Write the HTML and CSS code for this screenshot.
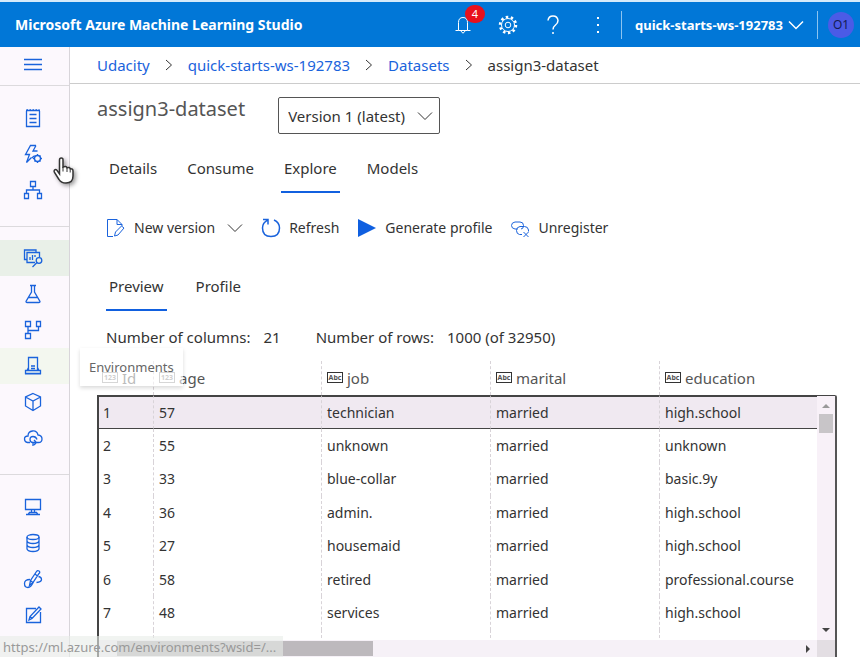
FILE: index.html
```
<!DOCTYPE html>
<html lang="en">
<head>
<meta charset="utf-8">
<meta name="viewport" content="width=device-width, initial-scale=1">
<title>assign3-dataset - Microsoft Azure Machine Learning Studio</title>
<link rel="stylesheet" href="styles.css">
</head>
<body>
<div class="app">
  <header class="topbar">
    <span class="brand">Microsoft Azure Machine Learning Studio</span>
    <button class="top-btn bell" aria-label="Notifications">
      <svg width="20" height="20" viewBox="0 0 20 20"><path d="M2.500 15.500h3v-8q0-5 4.500-5t4.500 5v8h3M5.500 15.500h9M8 16q2 4 4 0"/></svg>
      <span class="badge">4</span>
    </button>
    <button class="top-btn gear" aria-label="Settings">
      <svg width="20" height="20" viewBox="0 0 20 20"><circle cx="10" cy="10" r="8" stroke-width="2.500" stroke-dasharray="2.500 2.530"/><circle cx="10" cy="10" r="6.500"/><circle cx="10" cy="10" r="2.800"/></svg>
    </button>
    <button class="top-btn help" aria-label="Help">
      <svg width="20" height="20" viewBox="0 0 20 20"><path d="M5 5.500Q5.500 1 10 1t5 4.500q0 2.500-2.500 4.500T10 14.500M10 17v2" stroke-width="1.500"/></svg>
    </button>
    <button class="top-btn more" aria-label="More">
      <svg width="20" height="20" viewBox="0 0 20 20"><path d="M9 2h2v2H9zM9 9h2v2H9zM9 16h2v2H9z" fill="#fff" stroke="none"/></svg>
    </button>
    <button class="workspace">quick-starts-ws-192783
      <svg width="16" height="10" viewBox="0 0 16 10"><path d="M1 1.500l7 7 7-7" stroke-width="1.500"/></svg>
    </button>
    <button class="account"><span class="avatar">O1</span></button>
  </header>

  <div class="body">
    <nav class="sidebar" aria-label="Main">
      <div class="nav-top">
        <button class="nav-item" aria-label="Menu"><svg width="20" height="20" viewBox="0 0 20 20"><path d="M1 4.500h18M1 9.500h18M1 14.500h18"/></svg></button>
      </div>
      <div class="nav-group">
        <a class="nav-item" href="#" aria-label="Notebooks"><svg width="20" height="20" viewBox="0 0 20 20"><path d="M3.500 3v15.500h13V3M3 2.500h14" /><path d="M3.500 2h13" stroke-dasharray="1.500 1.500"/><path d="M6.500 6.500h7M6.500 10.500h7M6.500 14.500h7"/></svg></a>
        <a class="nav-item" href="#" aria-label="Automated ML"><svg width="20" height="20" viewBox="0 0 20 20"><path d="M13 1.500H7.500L2.500 10.500h4L3.500 18.500l5-5M13 1.500L10 7h4.500M9 14l2-2"/><circle cx="14.500" cy="14.500" r="3"/><path d="M14.500 10v1.500M14.500 17.500V19M10 14.500h1.500M17.500 14.500H19M11.500 11.500l1 1M16.500 16.500l1 1M17.500 11.500l-1 1M12.500 16.500l-1 1"/></svg></a>
        <a class="nav-item" href="#" aria-label="Designer"><svg width="20" height="20" viewBox="0 0 20 20"><path d="M7.500 1.500h5v5h-5zM1.500 13.500h4v5h-4zM14.500 13.500h4v5h-4zM10 6.500V10M3.500 13.500V10h13v3.500"/></svg></a>
      </div>
      <div class="nav-group">
        <a class="nav-item current" href="#" aria-label="Datasets"><svg width="20" height="20" viewBox="0 0 20 20"><path d="M13 4V2H1.500v9.500H4"/><path d="M12 14.500H4V4.500h12.500V9M7 12V9M9.500 12V7M12 9V7"/><circle cx="16" cy="12.500" r="2.800"/><path d="M14 14.500L9.500 19"/></svg></a>
        <a class="nav-item" href="#" aria-label="Experiments"><svg width="20" height="20" viewBox="0 0 20 20"><path d="M7 1.500h6M8.500 1.500V8L3 17.500q0 1 1 1h12q1 0 1-1L11.500 8V1.500M5.500 13.500h9"/></svg></a>
        <a class="nav-item" href="#" aria-label="Pipelines"><svg width="20" height="20" viewBox="0 0 20 20"><path d="M2.500 1.500h5v5h-5zM13.500 1.500h4v5h-4zM2.500 13.500h5v5h-5zM5 6.500v7M5 10.500h10.500v-4"/></svg></a>
        <a class="nav-item hovered" href="#" aria-label="Environments"><svg width="20" height="20" viewBox="0 0 20 20"><path d="M5.500 14V1.500h9V14M8 12.500h4M8 10h4M2.500 14.500h15v3h-15zM4 14.500l1.500-3M16 14.500l-1.500-3M2 17.800h16"/></svg></a>
        <a class="nav-item" href="#" aria-label="Models"><svg width="20" height="20" viewBox="0 0 20 20"><path d="M10 1.500l7.500 3.500v9L10 18.500 2.500 14V5zM2.500 5L10 9l7.500-4M10 9v9.500"/></svg></a>
        <a class="nav-item" href="#" aria-label="Endpoints"><svg width="20" height="20" viewBox="0 0 20 20"><path d="M7 14.500H4.500Q1.500 14 1.500 11t3.500-3Q5 3.500 9.500 3t5.500 4q4 .5 4 4t-3.500 3.500H14"/><path d="M14 11.500q-1-3-4-3t-3 3 3 3h3M11 12l2.500 2.500L11 17M10 14.500V18"/></svg></a>
      </div>
      <div class="nav-group">
        <a class="nav-item" href="#" aria-label="Compute"><svg width="20" height="20" viewBox="0 0 20 20"><path d="M2.500 2.500h15v10h-15zM8.500 12.500v3M11.500 12.500v3M6.500 15.500h7l1.500 2H5zM3 17.500h14"/></svg></a>
        <a class="nav-item" href="#" aria-label="Datastores"><svg width="20" height="20" viewBox="0 0 20 20"><ellipse cx="10" cy="4" rx="6" ry="2.500"/><path d="M4 4v12q1 2.500 6 2.500t6-2.500V4M4 8q1 2.500 6 2.500T16 8M4 12q1 2.500 6 2.500t6-2.500"/></svg></a>
        <a class="nav-item" href="#" aria-label="Data labeling"><svg width="20" height="20" viewBox="0 0 20 20"><path d="M6.500 16.500l1-5 6-9q1-1.500 2.500-.5t0 2.500l-6 9zM8 12l2.500 2M12 5l2.500 2"/><path d="M7 10.500q-5.500 0-5.500 4T5 18.500q3 0 5-5M15.500 7.500q3 .5 3 3t-5 3"/></svg></a>
        <a class="nav-item" href="#" aria-label="Linked services"><svg width="20" height="20" viewBox="0 0 20 20"><path d="M13 3.500H3.500v14h14V7M6 15l1-3.500L16 2l2 2-9 9.500zM7 11.500l2 2"/></svg></a>
      </div>
      <span class="tooltip" role="tooltip">Environments</span>
      <svg class="pointer" width="24" height="30" viewBox="0 0 24 30" aria-hidden="true"><path d="M8.500 18V4q0-2 1.800-2T12 4v7q3-1.500 4 .8 2.500-1 3.200 1 2.800-.3 2.800 2.200v5q0 7-7 7-5 0-7-3.500l-4.500-7q-1-2 .5-2.700T6 14.500z" fill="#fff" stroke="#333" stroke-width="1.500"/><path d="M12 11v4.500M16 12v4M19.200 13v3.500" stroke="#333"/></svg>
    </nav>

    <main class="main">
      <nav class="crumbs" aria-label="Breadcrumb">
        <a href="#">Udacity</a><svg width="8" height="12" viewBox="0 0 8 12"><path d="M1 1l5.500 5L1 11"/></svg>
        <a href="#">quick-starts-ws-192783</a><svg width="8" height="12" viewBox="0 0 8 12"><path d="M1 1l5.500 5L1 11"/></svg>
        <a href="#">Datasets</a><svg width="8" height="12" viewBox="0 0 8 12"><path d="M1 1l5.500 5L1 11"/></svg>
        <span>assign3-dataset</span>
      </nav>

      <div class="content">
        <div class="heading">
          <h1>assign3-dataset</h1>
          <div class="version">
            <select aria-label="Version"><option>Version 1 (latest)</option></select>
            <svg width="16" height="10" viewBox="0 0 16 10"><path d="M1 1.500l7 7 7-7"/></svg>
          </div>
        </div>

        <div class="tabs" role="tablist">
          <button role="tab">Details</button>
          <button role="tab">Consume</button>
          <button role="tab" class="selected" aria-selected="true">Explore</button>
          <button role="tab">Models</button>
        </div>

        <div class="toolbar">
          <button class="tool new"><svg width="20" height="20" viewBox="0 0 20 20"><path d="M7 18.500H1.500v-17H11l5 5V8M11 1.500v5h5M8.500 18l1-4 6-6 2.500 2-6 7z"/></svg>New version<svg class="chev" width="16" height="10" viewBox="0 0 16 10"><path d="M1 1.500l7 7 7-7"/></svg></button>
          <button class="tool"><svg width="20" height="20" viewBox="0 0 20 20"><path d="M13 2q5.500 2.500 5.500 8 0 8.500-8.500 8.500T1.500 10q0-5 5-7.800M2 1.500h5v5" stroke-width="1.500"/></svg>Refresh</button>
          <button class="tool play"><svg width="20" height="20" viewBox="0 0 20 20"><path d="M1 1l18 9-18 9z" fill="#0f5fe0" stroke="none"/></svg>Generate profile</button>
          <button class="tool unreg"><svg width="20" height="20" viewBox="0 0 20 20"><path d="M7.500 11H5Q1.500 10.500 1.500 7.500T5 4h5q3.500 0 3.500 3.500T11 11" /><path d="M12 16.500H9.500Q6.500 16 6.500 12.500T10 8.500h4.500q3.500 0 4 3.500v1.500M13.500 14l5 5M18.500 14l-5 5"/></svg>Unregister</button>
        </div>

        <div class="tabs subtabs" role="tablist">
          <button role="tab" class="selected" aria-selected="true">Preview</button>
          <button role="tab">Profile</button>
        </div>

        <div class="counts">
          <span>Number of columns:</span><span>21</span>
          <span class="rows">Number of rows:</span><span>1000 (of 32950)</span>
        </div>

        <div class="grid">
          <table>
            <colgroup><col class="c-id"><col class="c-age"><col class="c-job"><col class="c-marital"><col></colgroup>
            <thead>
              <tr>
                <th><span class="type num">123</span>Id</th>
                <th><span class="type num">123</span>age</th>
                <th><span class="type">Abc</span>job</th>
                <th><span class="type">Abc</span>marital</th>
                <th><span class="type">Abc</span>education</th>
              </tr>
            </thead>
            <tbody>
              <tr class="active"><td>1</td><td>57</td><td>technician</td><td>married</td><td>high.school</td></tr>
              <tr><td>2</td><td>55</td><td>unknown</td><td>married</td><td>unknown</td></tr>
              <tr><td>3</td><td>33</td><td>blue-collar</td><td>married</td><td>basic.9y</td></tr>
              <tr><td>4</td><td>36</td><td>admin.</td><td>married</td><td>high.school</td></tr>
              <tr><td>5</td><td>27</td><td>housemaid</td><td>married</td><td>high.school</td></tr>
              <tr><td>6</td><td>58</td><td>retired</td><td>married</td><td>professional.course</td></tr>
              <tr><td>7</td><td>48</td><td>services</td><td>married</td><td>high.school</td></tr>
              <tr class="partial"><td></td><td></td><td></td><td></td><td></td></tr>
            </tbody>
          </table>
          <div class="vbar"><i class="up"></i><i class="thumb"></i><i class="down"></i></div>
          <div class="hbar"><i class="thumb"></i><i class="right"></i></div>
          <div class="corner"></div>
        </div>
      </div>
    </main>
  </div>
  <div class="status">https://ml.azure.com/environments?wsid=/...</div>
</div>
</body>
</html>
```
FILE: styles.css
```
* { box-sizing: border-box; }
body {
  margin: 0;
  font: 15px/20px "Noto Sans", "Open Sans", sans-serif;
  color: #333;
  background: #fff;
}
button { font: inherit; color: inherit; background: none; border: 0; padding: 0; }
a { color: #1a63dc; text-decoration: none; }
svg { fill: none; stroke: currentColor; flex: none; display: block; }

.app {
  position: relative;
  display: flex;
  flex-direction: column;
  height: 100vh;
  overflow: hidden;
}

/* top bar */
.topbar {
  display: flex;
  align-items: center;
  height: 47px;
  flex: none;
  border-top: 2px solid #d5eafa;
  background: #0177d7;
  color: #fff;
  padding-left: 15px;
}
.brand { font-size: 14px; font-weight: 700; margin-right: auto; white-space: nowrap; }
.top-btn { position: relative; width: 45px; display: flex; justify-content: center; }
.badge {
  position: absolute;
  left: 24px;
  top: -10px;
  width: 20px;
  height: 18px;
  border-radius: 9px;
  background: #e8111c;
  font-size: 11px;
  line-height: 18px;
}
.workspace {
  display: flex;
  align-items: center;
  gap: 5px;
  height: 28px;
  padding: 0 13px;
  border-left: 1px solid #8cc4f0;
  border-right: 1px solid #8cc4f0;
  font-size: 13px;
  font-weight: 700;
  white-space: nowrap;
}
.account { padding-left: 10px; }
.avatar {
  display: block;
  width: 26px;
  height: 26px;
  margin-right: 6px;
  border-radius: 50%;
  background: #4b5be6;
  color: #151c52;
  font-size: 12px;
  line-height: 26px;
}

.body { display: flex; flex: 1; min-height: 0; }

/* navigation rail */
.sidebar {
  position: relative;
  width: 70px;
  flex: none;
  border-right: 1px solid #d8d5da;
  background: #fcf8fd;
  color: #1a63dc;
}
.sidebar .nav-item svg { stroke-width: 1.3; }
.nav-item {
  display: flex;
  align-items: center;
  justify-content: center;
  width: 100%;
  height: 36px;
  padding-right: 3px;
  color: #1a63dc;
}
.nav-top { height: 39px; border-bottom: 1px solid #dcdadd; }
.nav-group { padding: 14px 0 18px; border-bottom: 1px solid #dcdadd; }
.nav-group:last-of-type { border-bottom: 0; }
.nav-group + .nav-group { padding-top: 13px; }
.nav-group:last-of-type { padding-top: 14px; }
.current { background: #e9f0e8; }
.hovered { background: #f3f7ef; }
.tooltip {
  position: absolute;
  left: 80px;
  top: 301px;
  z-index: 2;
  height: 38px;
  padding: 10px 9px 0;
  background: rgba(255, 255, 255, 0.6);
  box-shadow: 0 2px 4px rgba(0, 0, 0, 0.15);
  color: #666;
  font-size: 13px;
  line-height: 18px;
}
.pointer {
  position: absolute;
  left: 51px;
  top: 109px;
  z-index: 2;
  filter: drop-shadow(2px 2px 2px rgba(0, 0, 0, 0.4));
}

/* page */
.main { flex: 1; min-width: 0; display: flex; flex-direction: column; }
.crumbs {
  display: flex;
  align-items: center;
  gap: 15px;
  height: 37px;
  flex: none;
  padding-left: 27px;
  border-bottom: 1px solid #ccc;
  white-space: nowrap;
}
.content {
  flex: 1;
  min-height: 0;
  display: flex;
  flex-direction: column;
  padding: 13px 23px 0 27px;
}
.heading { display: flex; gap: 33px; flex: none; }
h1 { margin: 0; font-size: 20px; font-weight: 400; line-height: 24px; color: #555; }
.version { position: relative; }
.version select {
  appearance: none;
  width: 162px;
  height: 37px;
  padding: 0 30px 0 9px;
  border: 1px solid #555;
  border-radius: 2px;
  background: #fff;
  font: inherit;
  color: inherit;
}
.version svg { position: absolute; right: 7px; top: 14px; pointer-events: none; }

.tabs { display: flex; gap: 24px; margin-top: 14px; padding-left: 9px; flex: none; }
.tabs button { height: 45px; padding: 0 3px 4px; border-bottom: 2px solid transparent; }
.tabs .selected { border-color: #1160df; }
.toolbar {
  display: flex;
  align-items: center;
  gap: 18px;
  height: 20px;
  margin-top: 25px;
  padding-left: 9px;
  flex: none;
  font-size: 14px;
  white-space: nowrap;
}
.tool { display: flex; align-items: center; gap: 8px; }
.tool > svg:first-child { color: #1a63dc; }
.chev { margin-left: 4px; }
.subtabs { gap: 26px; margin-top: 28px; }
.counts { display: flex; gap: 13px; margin-top: 16px; padding-left: 9px; flex: none; white-space: nowrap; }
.rows { margin-left: 22px; }

/* data grid */
.grid {
  display: grid;
  grid-template-columns: minmax(0, 1fr) 20px;
  grid-template-rows: minmax(0, 1fr) 17px;
  flex: 1;
  min-height: 0;
  margin-top: 14px;
  overflow: hidden;
}
table { table-layout: fixed; width: 100%; border-spacing: 0; align-self: start; font-size: 14px; }
.c-id { width: 56px; }
.c-age { width: 168px; }
.c-job, .c-marital { width: 169px; }
th, td { padding: 0 5px; border-left: 1px dashed #d8d3d8; text-align: left; white-space: nowrap; font-weight: 400; }
th { height: 34px; color: #555; font-size: 15px; }
th:first-child { border-left-color: transparent; padding-left: 4px; }
td { height: 34px; }
tr:nth-child(even) td { height: 33px; }
td:first-child { border-left: 2px solid #444; padding-left: 4px; }
.active td { border-top: 2px solid #444; border-bottom: 1px solid #444; background: #f0e9f1; }
.type {
  display: inline-block;
  width: 16px;
  height: 11px;
  margin-right: 4px;
  border: 1px solid #333;
  font-size: 7px;
  font-weight: 700;
  line-height: 9px;
  text-align: center;
  vertical-align: 4px;
}
.num { border-color: #999; color: #888; }
.vbar {
  display: flex;
  flex-direction: column;
  align-items: center;
  margin-top: 34px;
  padding: 8px 0;
  border-top: 1px solid #444;
  border-right: 2px solid #555;
  border-radius: 0 2px 0 0;
  background: #f8f1f8;
}
.up, .down { border: 4px solid transparent; }
.up { border-top: 0; border-bottom-color: #999; }
.down { border-bottom: 0; border-top-color: #444; margin-top: auto; }
.vbar .thumb { width: 14px; height: 19px; margin-top: 6px; background: #c8c5c8; }
.hbar {
  display: flex;
  align-items: center;
  padding: 0 7px 0 18px;
  border-left: 2px solid #444;
  background: #f6f1f7;
  z-index: 1;
}
.hbar .thumb { width: 256px; height: 15px; background: #bdb9bd; }
.right { border: 4px solid transparent; border-right: 0; border-left-color: #444; margin-left: auto; }
.corner { background: #e3dee3; border-right: 2px solid #555; z-index: 1; }

.status {
  position: absolute;
  left: 0;
  bottom: 0;
  z-index: 3;
  width: 283px;
  height: 21px;
  padding-left: 3px;
  background: rgba(232, 236, 232, 0.6);
  color: #999;
  font-size: 13px;
  line-height: 22px;
  white-space: nowrap;
}
```
